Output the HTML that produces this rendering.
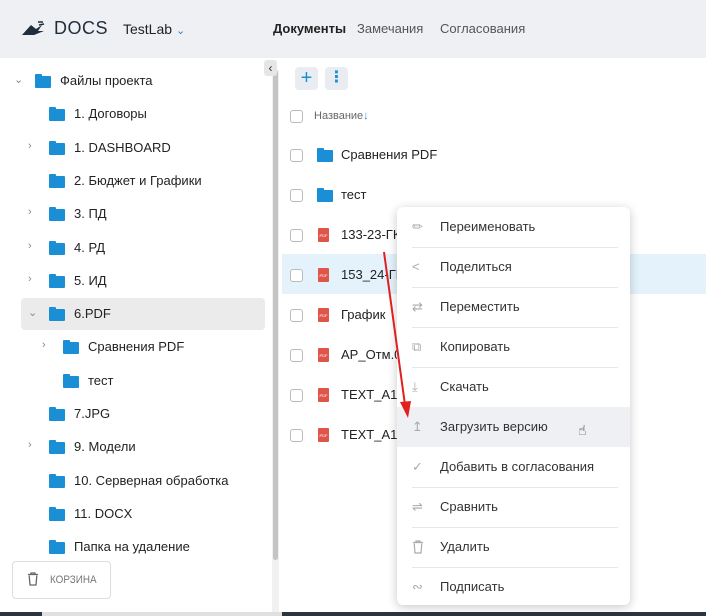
<!DOCTYPE html><html><head><meta charset="utf-8"><style>
*{margin:0;padding:0;box-sizing:border-box}
body{width:706px;height:616px;overflow:hidden;background:#fff;font-family:"Liberation Sans","DejaVu Sans",sans-serif;font-size:13px;color:#222;position:relative}
.a{position:absolute;white-space:nowrap}
.hdr{position:absolute;left:0;top:0;width:706px;height:58px;background:#eef0f3}
.fold{position:absolute;width:16px;height:12px;background:#1a8fd6;border-radius:1px}
.fold:before{content:"";position:absolute;left:0;top:-2px;width:7px;height:3px;background:#1a8fd6;border-radius:1px 1px 0 0}
.chev{position:absolute;color:#888;font-size:11px}
.cb{position:absolute;width:13px;height:13px;border:1px solid #bbb;border-radius:3px;background:#fff}
.pdf{position:absolute;width:11px;height:14px;background:#e0554a;border-radius:1px;color:#fff;font-size:4px;text-align:center;line-height:16px}
.mi{position:absolute;left:0;width:233px;height:40px}
.mi span{position:absolute;left:43px;top:12px;font-size:13px;color:#333}
.mi i{position:absolute;left:15px;top:12px;color:#aaa;font-style:normal;font-size:13px}
.sep{position:absolute;left:15px;width:206px;height:1px;background:#e6e6e6}
</style></head><body>
<div class="hdr"></div>
<svg class="a" style="left:22px;top:20px" width="24" height="16" viewBox="0 0 24 16"><path d="M0 15 L9 5 L14 9 L20 5 L16 11 L22 11 L12 15 Z" fill="#1f2d3d"/><path d="M16 2 L21 2 M17 5 L22 4" stroke="#1f2d3d" stroke-width="1.5"/></svg>
<div class="a" style="left:54px;top:18px;font-size:18px;color:#1f2d3d;letter-spacing:0.5px">DOCS</div>
<div class="a" style="left:123px;top:21px;font-size:14px;color:#222">TestLab <span style="color:#1a8fd6;font-size:11px">&#8964;</span></div>
<div class="a" style="left:273px;top:21px;font-size:13px;font-weight:bold;color:#222">Документы</div>
<div class="a" style="left:357px;top:21px;font-size:13px;color:#555">Замечания</div>
<div class="a" style="left:440px;top:21px;font-size:13px;color:#555">Согласования</div>

<div class="a" style="left:272px;top:70px;width:7px;height:546px;background:#f1f1f1"></div>
<div class="a" style="left:273px;top:70px;width:5px;height:490px;background:#c4c4c4;border-radius:3px"></div>
<div class="a" style="left:264px;top:60px;width:13px;height:16px;background:#e6e6e6;border-radius:3px;font-size:12px;text-align:center;line-height:16px;color:#333">&lsaquo;</div>
<div class="a" style="left:21px;top:298px;width:244px;height:32px;background:#ebebeb;border-radius:4px"></div>
<div id="tree"></div>

<div class="a" style="left:12px;top:561px;width:99px;height:38px;border:1px solid #ddd;border-radius:4px;background:#fff"></div>
<svg class="a" style="left:27px;top:572px" width="12" height="14" viewBox="0 0 12 14"><path d="M1 2.5H11M4 2.5V1H8V2.5M2.2 3.5L3 13H9L9.8 3.5" fill="none" stroke="#666" stroke-width="1.3"/></svg>
<div class="a" style="left:50px;top:574px;font-size:11px;color:#777;transform:scaleX(0.9);transform-origin:left">КОРЗИНА</div>
<div class="a" style="left:0;top:612px;width:706px;height:4px;background:#2a3540"></div>
<div class="a" style="left:42px;top:612px;width:240px;height:4px;background:#e0e0e0"></div>

<div class="a" style="left:295px;top:67px;width:23px;height:23px;background:#e9edf1;border-radius:4px;color:#1a8fd6;font-size:20px;text-align:center;line-height:22px">+</div>
<div class="a" style="left:325px;top:67px;width:23px;height:23px;background:#e9edf1;border-radius:4px;color:#1a8fd6;font-size:16px;font-weight:bold;text-align:center;line-height:22px">&#8942;</div>
<div class="cb" style="left:290px;top:110px"></div>
<div class="a" style="left:314px;top:110px;font-size:11px;color:#666">Название<span style="color:#1a8fd6">&#8595;</span></div>
<div class="a" style="left:282px;top:254px;width:424px;height:40px;background:#e3f2fb"></div>
<div id="files"></div>

<div class="a" style="left:397px;top:207px;width:233px;height:398px;background:#fff;border-radius:6px;box-shadow:0 2px 10px rgba(0,0,0,0.22)">
<div class="mi" style="top:200px;background:#eef0f3"></div>
<div id="menu"></div>
</div>
<svg class="a" style="left:0;top:0" width="706" height="616"><line x1="384" y1="252" x2="405" y2="405" stroke="#e02020" stroke-width="2"/><path d="M400 402 L408 418 L411 401 Z" fill="#e02020"/></svg>
<div class="a" style="left:578px;top:422px;font-size:14px;color:#333">&#9757;</div>
<script>
var t=[[0,"Файлы проекта",1,"v"],[1,"1. Договоры",0,""],[1,"1. DASHBOARD",0,">"],[1,"2. Бюджет и Графики",0,""],[1,"3. ПД",0,">"],[1,"4. РД",0,">"],[1,"5. ИД",0,">"],[1,"6.PDF",0,"v"],[2,"Сравнения PDF",0,">"],[2,"тест",0,""],[1,"7.JPG",0,""],[1,"9. Модели",0,">"],[1,"10. Серверная обработка",0,""],[1,"11. DOCX",0,""],[1,"Папка на удаление",0,""],[1,"NWD",0,""]];
var h="";t.forEach(function(r,i){var y=81+i*33.3;var fx=r[0]==2?63:(r[0]==1?49:35);
if(r[3])h+='<div class="chev" style="left:'+(fx-21)+'px;top:'+(y-8)+'px">'+(r[3]=="v"?"&#8964;":"&rsaquo;")+'</div>';
h+='<div class="fold" style="left:'+fx+'px;top:'+(y-5)+'px"></div><div class="a" style="left:'+(fx+25)+'px;top:'+(y-8)+'px">'+r[1]+'</div>';});
document.getElementById("tree").innerHTML=h;
var f=[["f","Сравнения PDF"],["f","тест"],["p","133-23-ГК"],["p","153_24-ГК"],["p","График"],["p","AP_Отм.0"],["p","TEXT_A1_V"],["p","TEXT_A1_V"]];
h="";f.forEach(function(r,i){var y=155+i*40;h+='<div class="cb" style="left:290px;top:'+(y-6)+'px"></div>';
h+=r[0]=="f"?'<div class="fold" style="left:317px;top:'+(y-5)+'px"></div>':'<div class="pdf" style="left:318px;top:'+(y-7)+'px">PDF</div>';
h+='<div class="a" style="left:341px;top:'+(y-8)+'px">'+r[1]+'</div>';});
document.getElementById("files").innerHTML=h;
var tr='<svg width="12" height="14" viewBox="0 0 12 14" style="margin-top:1px"><path d="M1 2.5H11M4 2.5V1H8V2.5M2.2 3.5L3 13H9L9.8 3.5" fill="none" stroke="#aaa" stroke-width="1.2"/></svg>';
var m=[["&#9999;","Переименовать"],["&lt;","Поделиться"],["&#8644;","Переместить"],["&#10697;","Копировать"],["&#10515;","Скачать"],["&#8613;","Загрузить версию"],["&#10003;","Добавить в согласования"],["&#8652;","Сравнить"],[tr,"Удалить"],["&#8766;","Подписать"]];
h="";m.forEach(function(r,i){h+='<div class="mi" style="top:'+(i*40)+'px"><i>'+r[0]+'</i><span>'+r[1]+'</span></div>';if(i>0&&i!=5&&i!=6)h+='<div class="sep" style="top:'+(i*40)+'px"></div>';});
document.getElementById("menu").innerHTML=h;
</script>
</body></html>
